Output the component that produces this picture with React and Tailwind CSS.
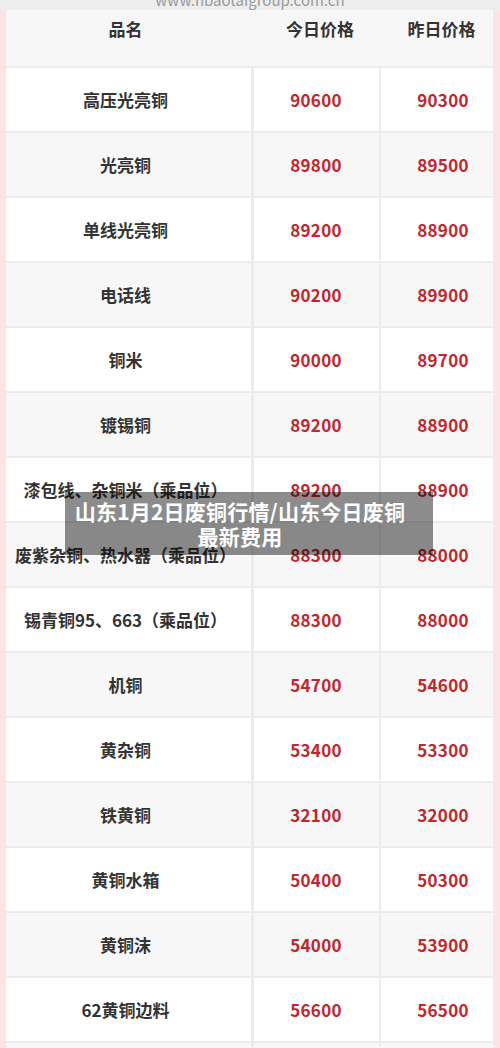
import React from "react";

const rows = [
  ["高压光亮铜", "90600", "90300"],
  ["光亮铜", "89800", "89500"],
  ["单线光亮铜", "89200", "88900"],
  ["电话线", "90200", "89900"],
  ["铜米", "90000", "89700"],
  ["镀锡铜", "89200", "88900"],
  ["漆包线、杂铜米（乘品位）", "89200", "88900"],
  ["废紫杂铜、热水器（乘品位）", "88300", "88000"],
  ["锡青铜95、663（乘品位）", "88300", "88000"],
  ["机铜", "54700", "54600"],
  ["黄杂铜", "53400", "53300"],
  ["铁黄铜", "32100", "32000"],
  ["黄铜水箱", "50400", "50300"],
  ["黄铜沫", "54000", "53900"],
  ["62黄铜边料", "56600", "56500"],
  ["", "", ""],
];

const font = { fontFamily: '"Noto Sans CJK SC", "Noto Sans", sans-serif' };

export default function App() {
  return (
    <div className="relative w-[500px] h-[1048px] overflow-hidden bg-[#ededed]" style={font}>
      <div className="h-[10px] overflow-hidden flex justify-center">
        <div className="text-[15px] leading-[15px] mt-[-8px] text-[#9a9a9a]">www.hbaotaigroup.com.cn</div>
      </div>
      <div className="flex">
        <div className="w-[6px] bg-[#fbe4e4]" />
        <div className="w-[487px] flex flex-col gap-[2px] bg-[#ececec]">
          <div className="h-[56px] bg-[#f7f7f7] grid grid-cols-[245px_127px_115px] pt-[8px] text-[17px] leading-[22px] font-bold text-[#333]">
            <div className="text-center pr-[6px]">品名</div>
            <div className="text-center pl-[11px]">今日价格</div>
            <div className="text-center pl-[12px]">昨日价格</div>
          </div>
          {rows.map((r, i) => (
            <div
              key={i}
              className="h-[63px] grid grid-cols-[245px_125px_112px] gap-x-[2.5px] text-[17px] font-bold"
            >
              <div className={`flex items-center justify-center pr-[6px] text-[#333] ${i % 2 ? "bg-[#f7f7f7]" : "bg-white"}`}>
                {r[0]}
              </div>
              <div className={`flex items-center justify-center text-[#c0262b] tracking-[0.3px] ${i % 2 ? "bg-[#f7f7f7]" : "bg-white"}`}>
                {r[1]}
              </div>
              <div className={`flex items-center justify-center pl-[12px] text-[#c0262b] tracking-[0.3px] ${i % 2 ? "bg-[#f7f7f7]" : "bg-white"}`}>
                {r[2]}
              </div>
            </div>
          ))}
        </div>
        <div className="w-[7px] bg-[#fbe4e4]" />
      </div>
      <div className="absolute left-[65px] top-[492px] w-[368px] h-[63px] bg-black/45 flex flex-col items-center justify-center pr-[18px] text-white font-bold text-[21px] leading-[25px] tracking-[0.2px]">
        <div>山东1月2日废铜行情/山东今日废铜</div>
        <div>最新费用</div>
      </div>
    </div>
  );
}
